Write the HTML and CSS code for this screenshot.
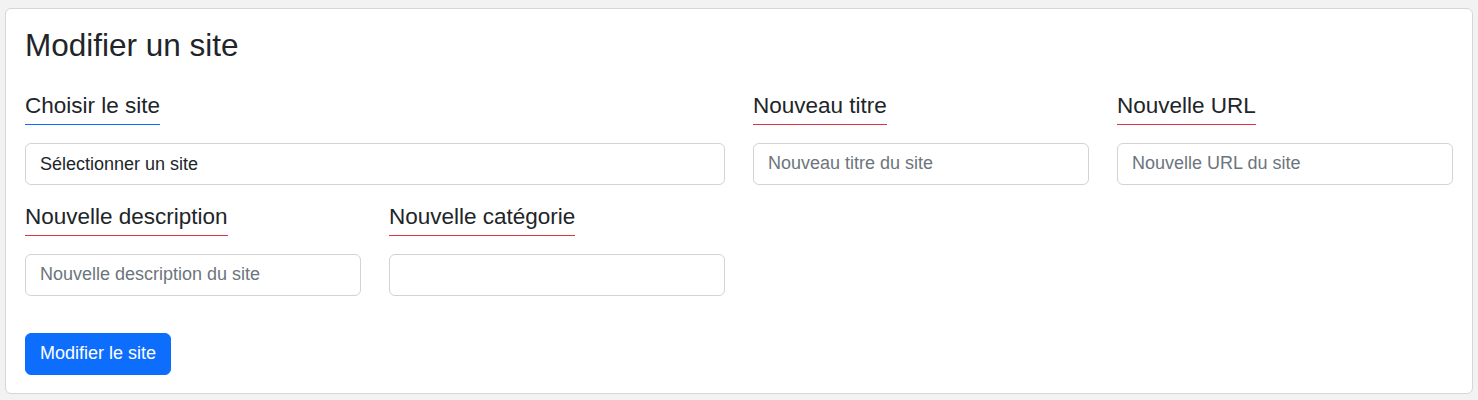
FILE: index.html
```html
<!DOCTYPE html>
<html lang="fr">
<head>
<meta charset="utf-8">
<title>Modifier un site</title>
<link rel="stylesheet" href="styles.css">
</head>
<body>
<div class="page">
  <section class="card">
    <h2 class="card-title">Modifier un site</h2>
    <form class="form-grid">
      <div class="field span-2">
        <label class="field-label label-blue" for="site">Choisir le site</label>
        <select id="site" class="control select">
          <option>Sélectionner un site</option>
        </select>
      </div>
      <div class="field">
        <label class="field-label" for="titre">Nouveau titre</label>
        <input id="titre" class="control" type="text" placeholder="Nouveau titre du site">
      </div>
      <div class="field">
        <label class="field-label" for="url">Nouvelle URL</label>
        <input id="url" class="control" type="text" placeholder="Nouvelle URL du site">
      </div>
      <div class="field">
        <label class="field-label" for="desc">Nouvelle description</label>
        <input id="desc" class="control" type="text" placeholder="Nouvelle description du site">
      </div>
      <div class="field">
        <label class="field-label" for="cat">Nouvelle catégorie</label>
        <select id="cat" class="control select"></select>
      </div>
    </form>
    <button class="btn-primary" type="button">Modifier le site</button>
  </section>
</div>
</body>
</html>
```
FILE: styles.css
```css
* { box-sizing: border-box; }
html, body {
  margin: 0;
  background: #f2f2f2;
  font-family: "Liberation Sans", Arial, sans-serif;
  color: #212529;
}
.page {
  padding: 8px 5px 6px;
}
.card {
  background: #fff;
  border: 1px solid #d6d6d6;
  border-radius: 6px;
  padding: 18px 19px 18px;
}
.card-title {
  margin: 0 0 27px;
  font-size: 31.5px;
  font-weight: 400;
  line-height: 1.2;
}
.form-grid {
  display: grid;
  grid-template-columns: repeat(4, 1fr);
  column-gap: 28px;
  row-gap: 18px;
}
.span-2 { grid-column: span 2; }
.field {
  display: flex;
  flex-direction: column;
  align-items: flex-start;
}
.field-label {
  display: inline-block;
  font-size: 22.5px;
  line-height: 27px;
  padding-bottom: 5px;
  border-bottom: 1px solid #dc3545;
  margin-bottom: 18px;
}
.label-blue { border-bottom-color: #0d6efd; }
.control {
  width: 100%;
  height: 42px;
  padding: 0 14px;
  border: 1px solid #ced4da;
  border-radius: 6px;
  background: #fff;
  font-family: inherit;
  font-size: 18px;
  color: #212529;
  outline: none;
}
.control::placeholder { color: #6c757d; opacity: 1; }
.select {
  appearance: none;
  -webkit-appearance: none;
}
.btn-primary {
  margin-top: 37px;
  height: 42px;
  padding: 0 14px;
  border: 1px solid #0d6efd;
  border-radius: 6px;
  background: #0d6efd;
  color: #fff;
  font-family: inherit;
  font-size: 18px;
  cursor: pointer;
}
```
